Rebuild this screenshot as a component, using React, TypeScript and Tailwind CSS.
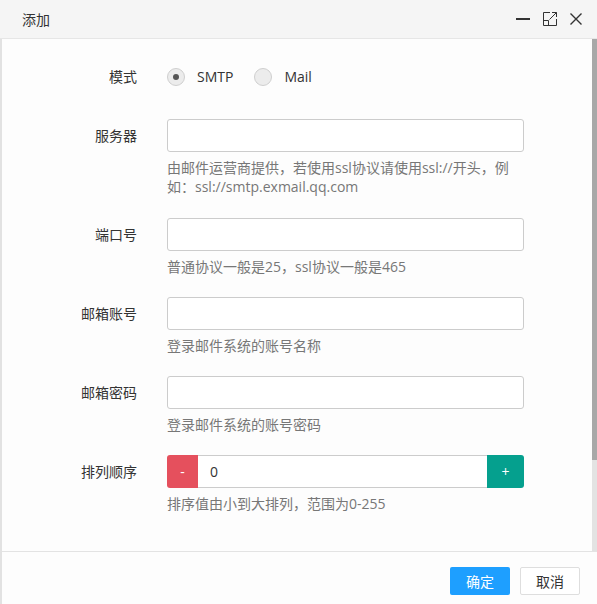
import { ReactNode } from 'react';

const font = { fontFamily: '"Open Sans", "Noto Sans CJK SC", sans-serif' };

const Radio = ({ checked, label }: { checked?: boolean; label: string }) => (
  <label className="flex items-center gap-3 text-[14px] text-[#333]">
    <span className="h-[18px] w-[18px] rounded-full border border-[#cfcfcf] bg-[#ececec] flex items-center justify-center">
      {checked && <span className="h-[6px] w-[6px] rounded-full bg-[#555]" />}
    </span>
    {label}
  </label>
);

const Row = ({ label, help, children, className = '' }: { label: string; help?: ReactNode; children: ReactNode; className?: string }) => (
  <div className={`flex ${className}`}>
    <div className="w-[135px] h-[33px] flex items-center justify-end text-[14px] text-[#333]">{label}</div>
    <div className="ml-[30px] w-[357px]">
      {children}
      {help && <p className="mt-[6px] text-[14px] leading-[19px] text-[#777]">{help}</p>}
    </div>
  </div>
);

const TextInput = () => (
  <div className="h-[33px] w-full rounded-[3px] border border-[#cccccc] bg-white" />
);

export default function App() {
  return (
    <div className="w-[597px] h-[604px] flex flex-col bg-[#fdfdfd] overflow-hidden" style={font}>
      {/* title bar */}
      <div className="h-[39px] shrink-0 flex items-center justify-between pl-[22px] pr-[15px] bg-[#f5f5f5] border-b border-[#e6e6e6]">
        <span className="text-[14px] text-[#333]">添加</span>
        <div className="flex items-center gap-[13px] text-[#333]">
          <svg width="14" height="14" viewBox="0 0 14 14">
            <path d="M0 7h14" stroke="currentColor" strokeWidth="2" />
          </svg>
          <svg width="14" height="14" viewBox="0 0 14 14" fill="none" stroke="currentColor" strokeWidth="1">
            <path d="M7 0.5H0.5V13.5H13.5V7" />
            <path d="M9 0.5H13.5V5" />
            <path d="M13.5 0.5L6.5 7.5" />
            <path d="M0.5 8.5H5.5V13.5" />
          </svg>
          <svg width="12" height="12" viewBox="0 0 12 12" stroke="currentColor" strokeWidth="1.4">
            <path d="M0.5 0.5L11.5 11.5M11.5 0.5L0.5 11.5" />
          </svg>
        </div>
      </div>

      <div className="flex-1 flex flex-col border-l-2 border-[#e2e2e2]">
        {/* form body */}
        <div className="flex-1 flex">
          <div className="flex-1 pt-[21px]">
            <Row label="模式" className="mb-[26px]">
              <div className="h-[33px] flex items-center gap-[21px]">
                <Radio checked label="SMTP" />
                <Radio label="Mail" />
              </div>
            </Row>
            <Row
              label="服务器"
              className="mb-[22px]"
              help="由邮件运营商提供，若使用ssl协议请使用ssl://开头，例如：ssl://smtp.exmail.qq.com"
            >
              <TextInput />
            </Row>
            <Row label="端口号" className="mb-[21px]" help="普通协议一般是25，ssl协议一般是465">
              <TextInput />
            </Row>
            <Row label="邮箱账号" className="mb-[21px]" help="登录邮件系统的账号名称">
              <TextInput />
            </Row>
            <Row label="邮箱密码" className="mb-[21px]" help="登录邮件系统的账号密码">
              <TextInput />
            </Row>
            <Row label="排列顺序" help="排序值由小到大排列，范围为0-255">
              <div className="h-[33px] flex">
                <button className="w-[31px] rounded-l-[3px] bg-[#e5505d] text-white text-[14px]">-</button>
                <div className="flex-1 flex items-center pl-[12px] border-y border-[#cccccc] bg-white text-[14px] text-[#333]">0</div>
                <button className="w-[37px] rounded-r-[3px] bg-[#05a08e] text-white text-[14px]">+</button>
              </div>
            </Row>
          </div>
          {/* scrollbar */}
          <div className="w-[5px] flex flex-col">
            <div className="h-[421px] bg-[#a8a8a8]" />
            <div className="flex-1 bg-[#e3e3e3]" />
          </div>
        </div>

        {/* footer */}
        <div className="h-[53px] shrink-0 flex items-start justify-end gap-[10px] pt-[15px] pr-[17px] border-t border-[#e3e3e3]">
          <button className="h-[28px] w-[60px] rounded-[2px] bg-[#1e9fff] text-white text-[14px]">确定</button>
          <button className="h-[28px] w-[60px] rounded-[2px] border border-[#dedede] bg-white text-[#333] text-[14px]">取消</button>
        </div>
      </div>
    </div>
  );
}
